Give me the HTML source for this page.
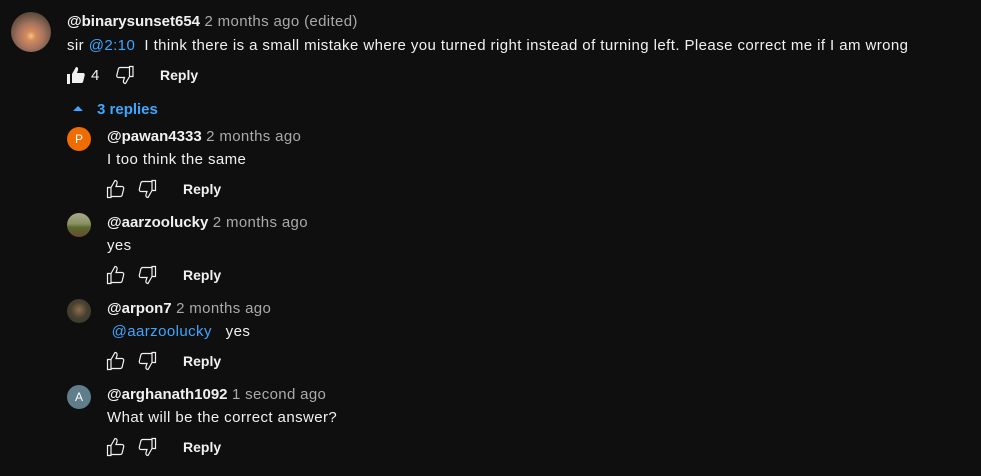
<!DOCTYPE html><html><head><style>
body{margin:0;background:#0f0f0f;width:981px;height:476px;overflow:hidden;font-family:"Liberation Sans",sans-serif;color:#f1f1f1;position:relative}
.a{position:absolute;white-space:nowrap}
.n{font-weight:bold;font-size:15px}
.t{color:#aaa;font-weight:normal;font-size:15px;letter-spacing:0.35px}
.b{font-size:15px;letter-spacing:0.42px}
.l{color:#3ea6ff}
.r{font-weight:bold;font-size:14px}
.av{position:absolute;border-radius:50%}
svg{position:absolute}
</style></head><body>
<div class="av" style="left:11px;top:12px;width:40px;height:40px;background:radial-gradient(circle at 50% 60%,#f3c28a 0,#d58a5a 15%,#a87560 40%,#5a4a3a 75%,#3a3a2a 100%)"></div>
<div class="a" style="left:67px;top:13px"><span class="n">@binarysunset654</span> <span class="t">2 months ago (edited)</span></div>
<div class="a b" style="left:67px;top:37px">sir <span class="l">@2:10</span>&nbsp; I think there is a small mistake where you turned right instead of turning left. Please correct me if I am wrong</div>
<svg style="left:66px;top:65px" width="20" height="20" viewBox="0 0 20 20"><path d="M1 9h3v10H1zM6 9l4-7c1.5 0 2.5 1 2 3l-1 3h6c1.2 0 2 1 1.7 2.2l-1.6 6.5c-.3.8-1 1.3-1.8 1.3H6z" fill="#f1f1f1"/></svg>
<div class="a b" style="left:91px;top:67px">4</div>
<svg style="left:114px;top:65px" width="20" height="20" viewBox="0 0 20 20"><path d="M19 1.5h-3.5v10H19zM15.5 11.5l-4 7c-1.5 0-2.5-1-2-3l1-3H4.5c-1.2 0-2-1-1.7-2.2l1.6-6.5c.3-.8 1-1.3 1.8-1.3h9.3" fill="none" stroke="#f1f1f1" stroke-width="1.2"/></svg>
<div class="a r" style="left:160px;top:67px">Reply</div>
<svg style="left:72px;top:104px" width="12" height="8" viewBox="0 0 12 8"><path d="M1 7L6 2l5 5z" fill="#3ea6ff"/></svg>
<div class="a l" style="left:97px;top:101px;font-weight:bold;font-size:15px">3 replies</div>

<div class="av" style="left:67px;top:127px;width:24px;height:24px;background:#ef6c00;color:#fff;font-size:12px;text-align:center;line-height:24px">P</div>
<div class="a" style="left:107px;top:128px"><span class="n">@pawan4333</span> <span class="t">2 months ago</span></div>
<div class="a b" style="left:107px;top:151px">I too think the same</div>

<div class="av" style="left:67px;top:213px;width:24px;height:24px;background:linear-gradient(#a8a890 0,#8a9060 45%,#5a6a30 60%,#6a4a30 100%)"></div>
<div class="a" style="left:107px;top:214px"><span class="n">@aarzoolucky</span> <span class="t">2 months ago</span></div>
<div class="a b" style="left:107px;top:237px">yes</div>

<div class="av" style="left:67px;top:299px;width:24px;height:24px;background:radial-gradient(circle at 50% 45%,#8a7050 0,#4a4030 45%,#2a3a2a 100%)"></div>
<div class="a" style="left:107px;top:300px"><span class="n">@arpon7</span> <span class="t">2 months ago</span></div>
<div class="a b" style="left:107px;top:323px">&nbsp;<span class="l">@aarzoolucky</span> &nbsp; yes</div>

<div class="av" style="left:67px;top:385px;width:24px;height:24px;background:#607d8b;color:#fff;font-size:12px;text-align:center;line-height:24px">A</div>
<div class="a" style="left:107px;top:386px"><span class="n">@arghanath1092</span> <span class="t">1 second ago</span></div>
<div class="a b" style="left:107px;top:409px">What will be the correct answer?</div>

<div id="acts"></div>
<script>
var h='';[189,275,361,447].forEach(function(y){
h+='<svg style="left:106px;top:'+(y-10)+'px" width="20" height="20" viewBox="0 0 20 20"><path d="M1.5 8.5h3.5v10H1.5zM5 8.5l4-7c1.5 0 2.5 1 2 3l-1 3h6c1.2 0 2 1 1.7 2.2l-1.6 6.5c-.3.8-1 1.3-1.8 1.3H5" fill="none" stroke="#f1f1f1" stroke-width="1.2"/></svg>';
h+='<svg style="left:137px;top:'+(y-10)+'px" width="20" height="20" viewBox="0 0 20 20"><path d="M18.5 1.5H15v10h3.5zM15 11.5l-4 7c-1.5 0-2.5-1-2-3l1-3H4c-1.2 0-2-1-1.7-2.2l1.6-6.5c.3-.8 1-1.3 1.8-1.3H15" fill="none" stroke="#f1f1f1" stroke-width="1.2"/></svg>';
h+='<div class="a r" style="left:183px;top:'+(y-8)+'px">Reply</div>';});
document.getElementById('acts').innerHTML=h;
</script>
</body></html>
